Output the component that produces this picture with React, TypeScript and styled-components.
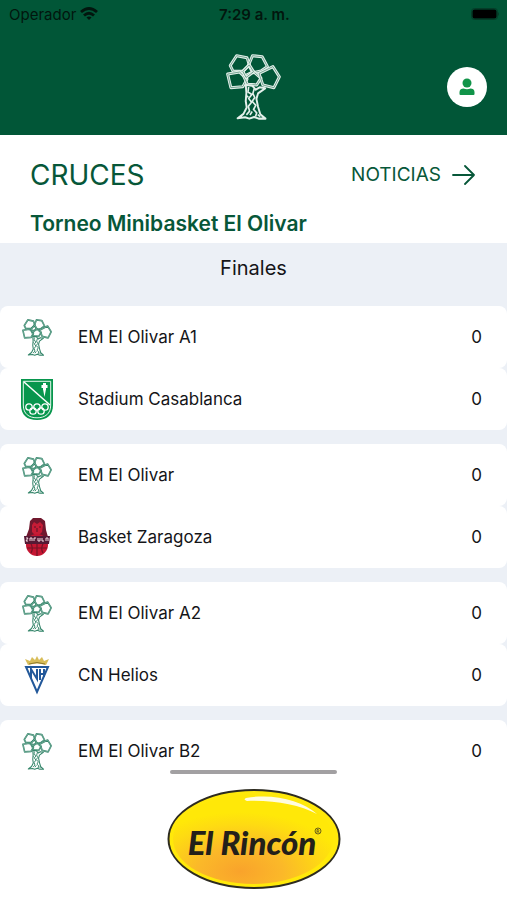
import React from 'react';
import styled, { createGlobalStyle } from 'styled-components';

const GlobalStyle = createGlobalStyle`
  * { box-sizing: border-box; }
  body { margin: 0; background: #fff; font-family: Inter, "Liberation Sans", sans-serif; color: #151518; }
  button { font: inherit; border: 0; padding: 0; cursor: pointer; }
  h1, h2, h3, ul { margin: 0; padding: 0; font-weight: 400; }
  svg { display: block; }
`;

const Page = styled.div`
  display: flex;
  flex-direction: column;
  height: 100vh;
`;

const Header = styled.header`
  flex: none;
  background: #015637;
`;

const StatusBar = styled.div`
  display: grid;
  grid-template-columns: 1fr auto 1fr;
  align-items: center;
  height: 28px;
  padding: 0 7px 0 9px;
  font-size: 15px;
  color: #02160e;
`;

const Carrier = styled.span`
  display: flex;
  align-items: center;
  gap: 4px;
`;

const Clock = styled.span`
  font-weight: 600;
`;

const Battery = styled.svg`
  justify-self: end;
`;

const Brand = styled.div`
  display: grid;
  grid-template-columns: 1fr auto 1fr;
  align-items: center;
  height: 107px;
  padding: 10px 20px 0;
`;

const Profile = styled.button`
  grid-column: 3;
  justify-self: end;
  display: grid;
  place-items: center;
  width: 40px;
  height: 40px;
  border-radius: 50%;
  background: #fff;
`;

const BrandLogo = styled.div`
  grid-column: 2;
`;

const Titles = styled.section`
  flex: none;
  display: flex;
  flex-direction: column;
  gap: 12px;
  padding: 22px 31px 0 30px;
  color: #075739;
`;

const TitleRow = styled.div`
  display: flex;
  justify-content: space-between;
  align-items: center;
`;

const Title = styled.h1`
  font-size: 28px;
  line-height: 36px;
`;

const NewsLink = styled.a`
  display: flex;
  align-items: center;
  gap: 11px;
  color: inherit;
  font-size: 19px;
  line-height: 24px;
  text-decoration: none;
`;

const Tournament = styled.h2`
  font-size: 21px;
  line-height: 38px;
  font-weight: 600;
`;

const Matches = styled.main`
  flex: 1;
  min-height: 0;
  overflow-y: auto;
  scrollbar-width: none;
  background: #ecf0f6;
`;

const Round = styled.h3`
  padding: 10px 0 23px;
  font-size: 20px;
  line-height: 30px;
  text-align: center;
`;

const MatchList = styled.div`
  display: flex;
  flex-direction: column;
  gap: 14px;
`;

const Match = styled.ul`
  list-style: none;
`;

const Team = styled.li`
  display: grid;
  grid-template-columns: 34px 1fr auto;
  column-gap: 24px;
  align-items: center;
  height: 62px;
  padding: 0 25px 0 20px;
  border-radius: 8px;
  background: #fff;
  font-size: 17px;
`;

const Crest = styled.span`
  display: grid;
  place-items: center;
`;

const Footer = styled.footer`
  flex: none;
  display: flex;
  flex-direction: column;
  align-items: center;
  gap: 14px;
  padding: 0 0 10px;
  background: #fff;
`;

const Handle = styled.div`
  width: 33%;
  height: 4px;
  border-radius: 2px;
  background: #a2a0a2;
`;

const treeLines = [
  'M23 45 43 16 75 22 82 43 62 62 32 62Z',
  'M80 43 92 16 122 19 138 48 118 61 93 66Z',
  'M15 70 52 64 75 85 62 107 25 110Z',
  'M65 77 95 63 118 82 105 102 76 100Z',
  'M112 68 155 48 175 78 158 110 124 102Z',
  'M62 62 82 43 95 63 72 80Z',
];
const trunk =
  'M71 102 73 125 71 150 74 168 64 187 46 200 69 197 82 201 97 196 111 201 132 201 116 188 109 166 104 143 109 127 131 112 114 109 102 116 91 104Z';

function Tree({ width, height, color, inner, weight }: { width: number; height: number; color: string; inner: string; weight: number }) {
  return (
    <svg width={width} height={height} viewBox="10 11 170 194" preserveAspectRatio="none" fill="none" strokeLinejoin="round" aria-hidden="true">
      {treeLines.map((d) => (
        <g key={d}>
          <path d={d} stroke={color} strokeWidth={weight} />
          <path d={d} stroke={inner} strokeWidth={2} />
        </g>
      ))}
      <path d={trunk} stroke={color} strokeWidth={6} />
      <path
        d="M80 108 78 123 90 130 80 142 89 153 79 165 83 179 73 190M97 114 93 127 99 139 91 150 102 162 95 174 105 184 101 195M84 190 91 180M116 195 108 189M74 134 79 138"
        stroke={color}
        strokeWidth={5}
      />
    </svg>
  );
}

function StadiumCrest() {
  return (
    <svg width="34" height="43" viewBox="0 0 34 43" fill="none" aria-hidden="true">
      <path d="M1 1H33V27C33 37 27 42 17 42S1 37 1 27Z" fill="#07964d" />
      <path d="M3.3 3.3H30.7V27C30.7 36 25 39.8 17 39.8S3.3 36 3.3 27Z" stroke="#e9f8ef" strokeWidth="1" />
      <path d="M4 4 30 27" stroke="#fff" strokeWidth="1.5" />
      <path d="M24.5 5V12M21.5 8.5H27.5" stroke="#fff" strokeWidth="3" />
      <path d="M23 11H26L24.5 19Z" fill="#fff" />
      <g stroke="#fff" strokeWidth="1.3">
        <circle cx="9" cy="29" r="3.2" />
        <circle cx="17" cy="29" r="3.2" />
        <circle cx="25" cy="29" r="3.2" />
        <circle cx="13" cy="33" r="3.2" />
        <circle cx="21" cy="33" r="3.2" />
      </g>
    </svg>
  );
}

function ZaragozaCrest() {
  return (
    <svg width="28" height="40" viewBox="0 0 28 40" fill="none" aria-hidden="true">
      <path d="M7 4 10 1H18L22 4 23 13 25 20H3L6 12Z" fill="#71182e" />
      <path d="M9 8 11 5 14 7 17 5 20 8 19 15 16 18H12L9 15Z" fill="#c61c36" />
      <path d="M11 10H13M16 10H18M14 11V15" stroke="#581325" />
      <circle cx="14" cy="28" r="11" fill="#c51632" />
      <path d="M14 26V39M4 31H24M7 25Q11 31 8 36M21 25Q17 31 20 36" stroke="#751426" strokeWidth="1.2" />
      <path d="M1 19H27L26 27H2Z" fill="#551a35" />
      <path d="M3 21H5L3 24H5M7 24V21H9V24M11 24V21H13M15 21V24H17V21M19 21V24H21M23 24V21H25V24" stroke="#f7dce3" strokeWidth="1" />
    </svg>
  );
}

function HeliosCrest() {
  return (
    <svg width="26" height="40" viewBox="0 0 26 40" fill="none" aria-hidden="true">
      <path d="M4 10 1 4 6 6 8 2 11 5 13 1 15 5 18 2 20 6 25 4 22 10Q13 7 4 10Z" fill="#d8bd58" />
      <path d="M5 9Q13 6 21 9" stroke="#8e792c" />
      <path d="M2 12H24L13 37Z" stroke="#22589a" strokeWidth="2" />
      <path d="M7 23V14L13 24V14M16 14V25M20 14V22M16 19H20" stroke="#22589a" strokeWidth="2" />
    </svg>
  );
}

const crests = {
  olivar: () => <Tree width={30} height={37} color="#34856a" inner="#c9e1d8" weight={9} />,
  stadium: StadiumCrest,
  zaragoza: ZaragozaCrest,
  helios: HeliosCrest,
};

type Side = { name: string; crest: keyof typeof crests; score: number };

const matches: Side[][] = [
  [
    { name: 'EM El Olivar A1', crest: 'olivar', score: 0 },
    { name: 'Stadium Casablanca', crest: 'stadium', score: 0 },
  ],
  [
    { name: 'EM El Olivar', crest: 'olivar', score: 0 },
    { name: 'Basket Zaragoza', crest: 'zaragoza', score: 0 },
  ],
  [
    { name: 'EM El Olivar A2', crest: 'olivar', score: 0 },
    { name: 'CN Helios', crest: 'helios', score: 0 },
  ],
  [{ name: 'EM El Olivar B2', crest: 'olivar', score: 0 }],
];

function SponsorLogo() {
  return (
    <svg width="174" height="102" viewBox="0 0 174 102" role="img" aria-label="El Rincón">
      <defs>
        <radialGradient id="glow" cx="0.42" cy="0.86" r="0.66">
          <stop offset="0" stopColor="#f9a32b" />
          <stop offset="0.4" stopColor="#fbb829" />
          <stop offset="0.8" stopColor="#fedb12" />
          <stop offset="1" stopColor="#ffe808" />
        </radialGradient>
      </defs>
      <ellipse cx="87" cy="51" rx="85.5" ry="49" fill="#ffe90a" stroke="#2d2b20" strokeWidth="2" />
      <ellipse cx="86" cy="51" rx="80" ry="45" fill="url(#glow)" />
      <path d="M79 10C105 5 135 12 150 26C132 17 108 12 80 13C77 12 77 11 79 10Z" fill="#fffce0" />
      <text x="85" y="67" textAnchor="middle" fontFamily="Lato, sans-serif" fontSize="33" fontWeight="900" fontStyle="italic" fill="#24201a">
        El Rincón
      </text>
      <circle cx="151" cy="43" r="3" fill="none" stroke="#4b421d" strokeWidth="0.8" />
      <path d="M150 45V41.5H151.3Q152.5 42.5 151.3 43.2H150M151.3 43.2L152.2 45" fill="none" stroke="#4b421d" strokeWidth="0.7" />
    </svg>
  );
}

export default function App() {
  return (
    <Page>
      <GlobalStyle />
      <Header>
        <StatusBar>
          <Carrier>
            Operador
            <svg width="18" height="14" viewBox="0 0 18 14" fill="none" stroke="currentColor" strokeWidth="2.8" aria-hidden="true">
              <path d="M1 5Q9-2 17 5M4 8.5Q9 4 14 8.5" />
              <path d="M6.5 10.5Q9 8.5 11.5 10.5L9 13Z" fill="currentColor" stroke="none" />
            </svg>
          </Carrier>
          <Clock>7:29 a. m.</Clock>
          <Battery width="29" height="12" viewBox="0 0 29 12" fill="none" aria-hidden="true">
            <rect x="0.5" y="0.5" width="26" height="11" rx="3" stroke="#053c28" />
            <rect x="1.5" y="1.5" width="24" height="9" rx="2" fill="#000" />
            <path d="M27 4Q29 6 27 8Z" fill="#053c28" />
          </Battery>
        </StatusBar>
        <Brand>
          <BrandLogo>
            <Tree width={55} height={66} color="#e4f0eb" inner="#3c7e64" weight={9} />
          </BrandLogo>
          <Profile aria-label="Perfil">
            <svg width="16" height="18" viewBox="0 0 16 18" fill="#119449" aria-hidden="true">
              <circle cx="8" cy="5" r="4.5" />
              <path d="M0.5 16V14C0.5 11.5 2.5 10.5 4.5 10.5Q8 12 11.5 10.5C13.5 10.5 15.5 11.5 15.5 14V16Q15.5 17 14.5 17H1.5Q0.5 17 0.5 16Z" />
            </svg>
          </Profile>
        </Brand>
      </Header>
      <Titles>
        <TitleRow>
          <Title>CRUCES</Title>
          <NewsLink href="#noticias">
            NOTICIAS
            <svg width="24" height="20" viewBox="0 0 24 20" fill="none" stroke="currentColor" strokeWidth="1.8" strokeLinecap="round" strokeLinejoin="round" aria-hidden="true">
              <path d="M1 10H22M13 1 22 10 13 19" />
            </svg>
          </NewsLink>
        </TitleRow>
        <Tournament>Torneo Minibasket El Olivar</Tournament>
      </Titles>
      <Matches>
        <Round>Finales</Round>
        <MatchList>
          {matches.map((sides) => (
            <Match key={sides[0].name}>
              {sides.map((side) => {
                const Icon = crests[side.crest];
                return (
                  <Team key={side.name}>
                    <Crest><Icon /></Crest>
                    <span>{side.name}</span>
                    <span>{side.score}</span>
                  </Team>
                );
              })}
            </Match>
          ))}
        </MatchList>
      </Matches>
      <Footer>
        <Handle />
        <SponsorLogo />
      </Footer>
    </Page>
  );
}
